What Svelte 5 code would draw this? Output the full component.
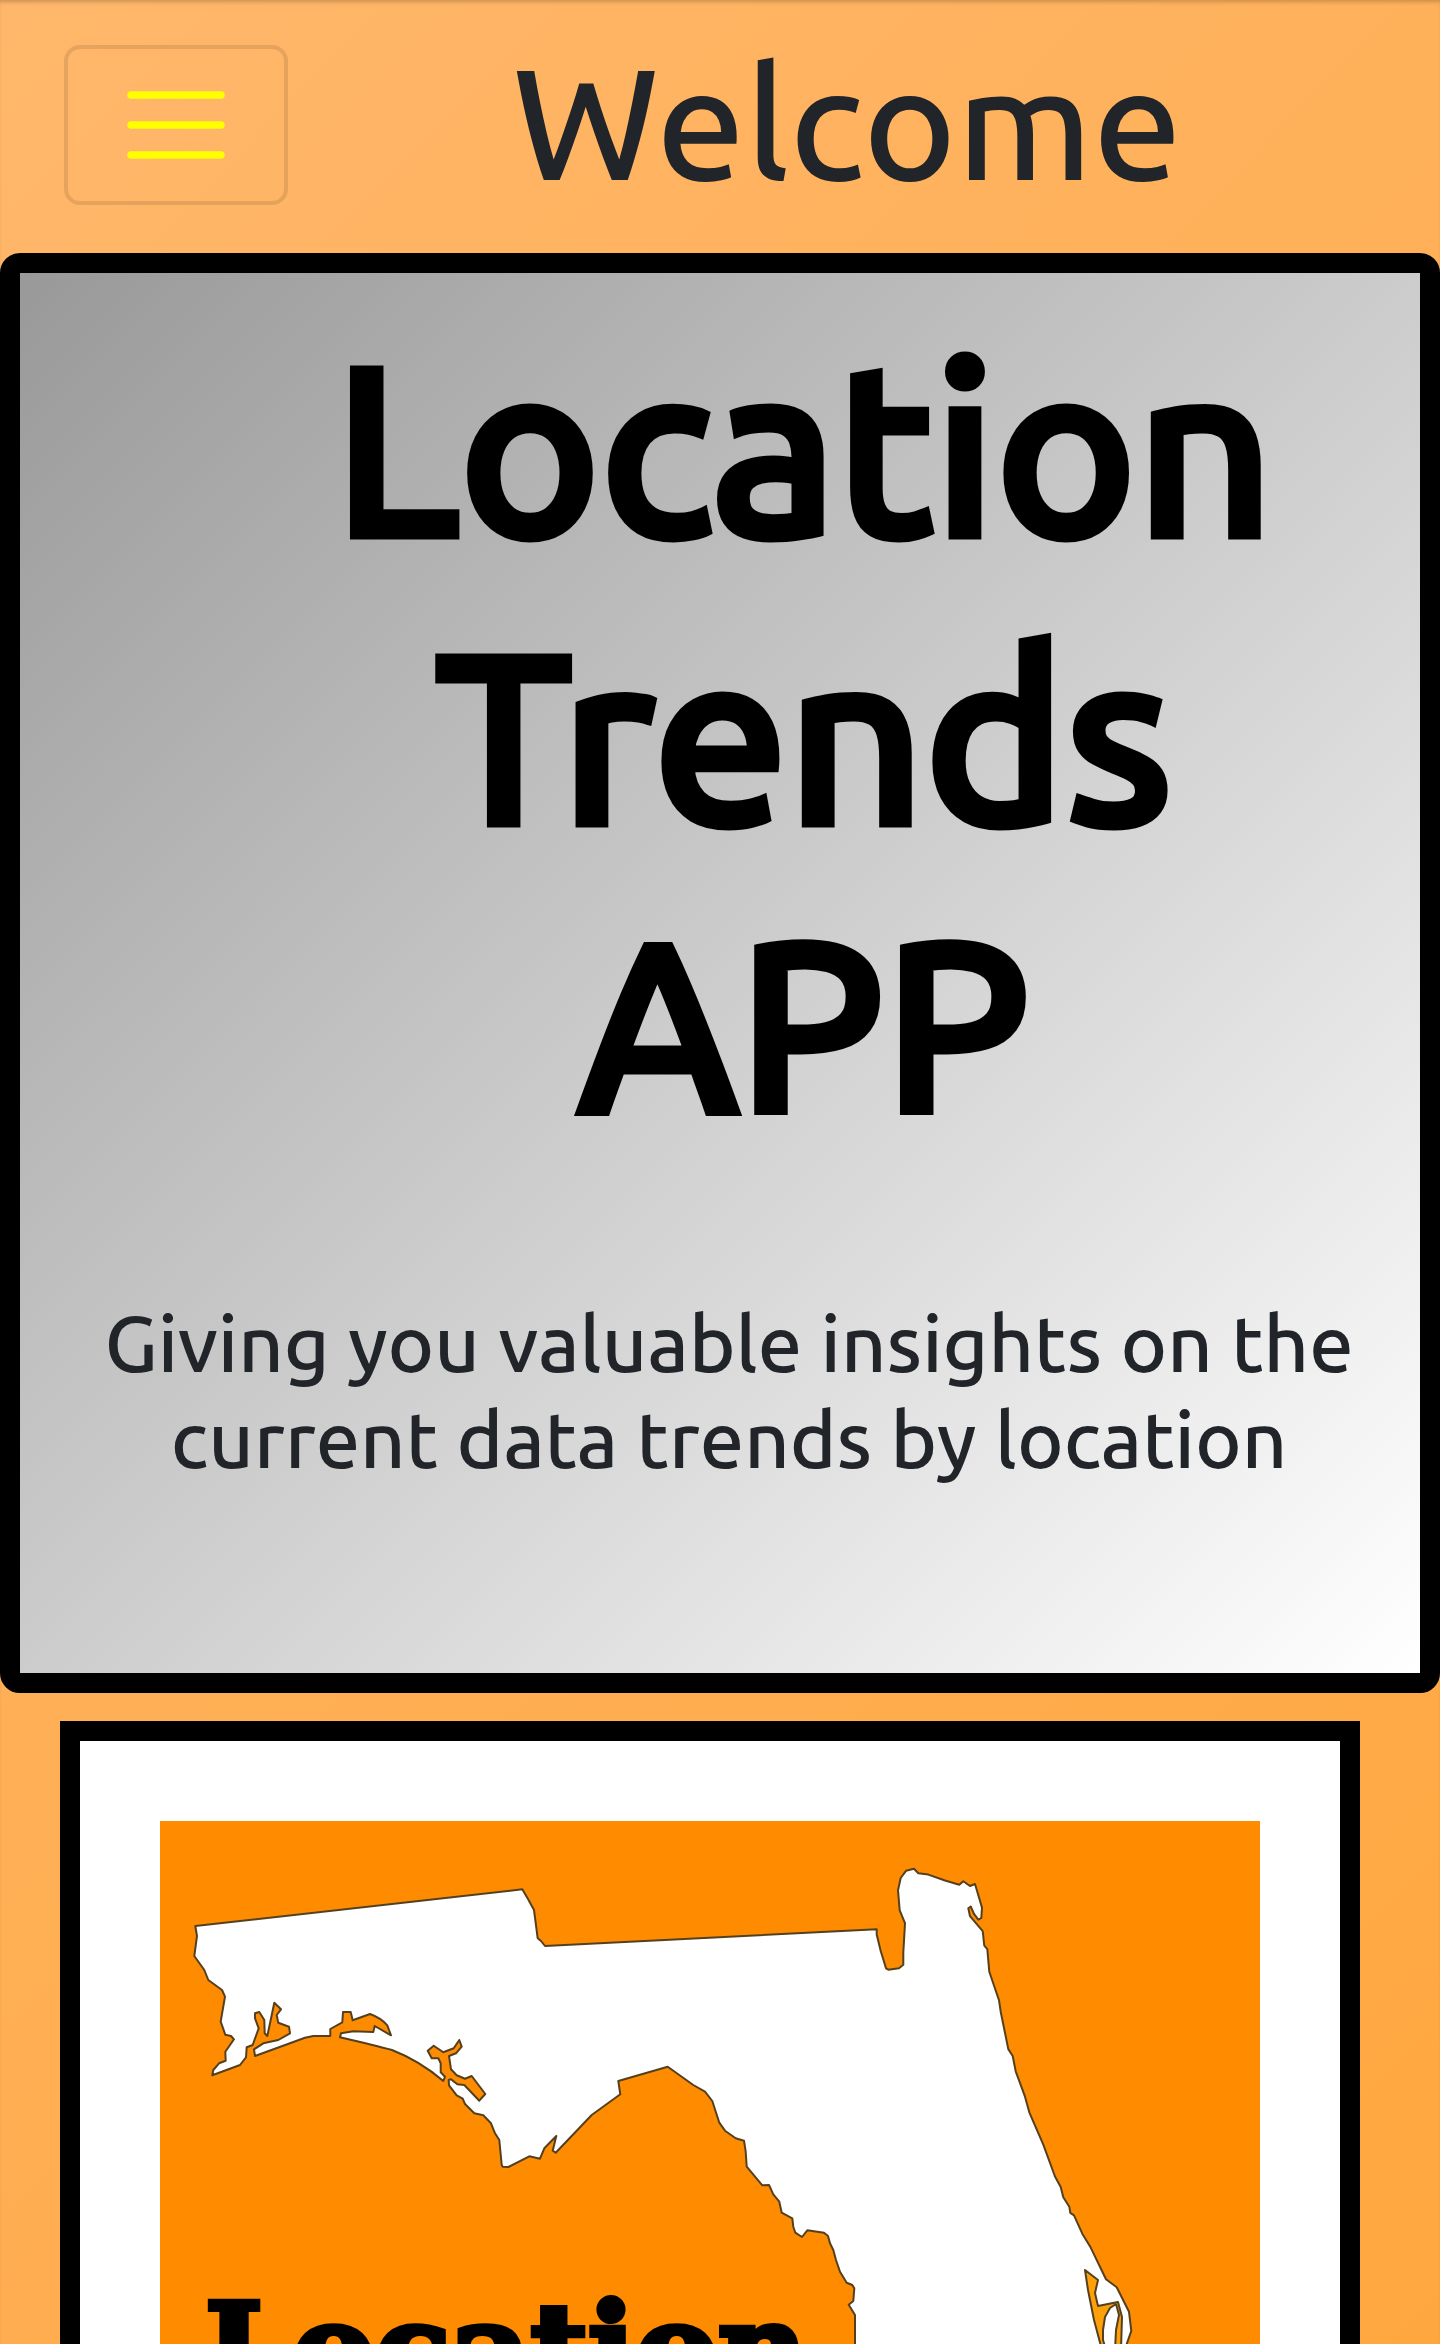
<script>
  let open = $state(false);
</script>

<div class="page">
  <header class="navbar">
    <button
      class="toggler"
      type="button"
      aria-label="Toggle navigation"
      aria-expanded={open}
      onclick={() => (open = !open)}
    >
      <svg class="bars" viewBox="0 0 32 32" aria-hidden="true">
        <path d="M4 8h24M4 16h24M4 24h24" />
      </svg>
    </button>
    <h2 class="welcome">Welcome</h2>
  </header>

  <main>
    <section class="hero">
      <h1 class="title">Location Trends APP</h1>
      <p class="lead">Giving you valuable insights on the current data trends by location</p>
    </section>

    <section class="card">
      <svg class="map" viewBox="160 1821 1100 1100" role="img" aria-label="Location logo over a map of Florida">
        <rect class="sea" x="160" y="1821" width="1100" height="1100" />
        <path
          class="land"
          d="M195.3 1926L522.3 1889.3 528 1899 534 1910 537.7 1938.3 541 1941 545 1946 876.7 1929.3 876.7 1934.6 880.7 1951 886 1968.3 888.3 1969.7 899 1968.3 903.3 1964.8 903.3 1952.7 905 1923.2 899.7 1910.3 898 1890.2 900.7 1878 906 1870.8 914 1868.7 918.3 1873.2 928.3 1874.6 945 1880.5 959.3 1884.7 963.3 1881.2 970 1886 975 1884 982 1907.6 981.3 1918 978.3 1919.7 974 1913.8 970.7 1906.5 968.3 1908.3 970 1916.2 982.7 1931.2 984.3 1945.7 987.3 1949.2 989.3 1971.8 999 2000.2 1000.7 2011.7 1008.3 2049.1 1012.7 2056 1015.7 2071.3 1025 2096.7 1029.3 2112.3 1043.3 2144.6 1055 2176.5 1060.7 2186.9 1063.3 2197.3 1069.3 2206.7 1070.3 2212.9 1074 2215.3 1082.3 2233.7 1090.7 2247.6 1106 2279.2 1116.7 2287.2 1129 2311.8 1131.3 2330.9 1126.7 2344 1150 2480 1120 2700 1010 2640 900 2480 855 2400 855 2315 848.7 2304.7 853.3 2301 854.3 2288.3 852.3 2285 846.7 2282.7 840 2271.7 836 2260 833.3 2250 830 2243.3 828 2236 824 2232.7 807.3 2230.3 802 2237 795.3 2232.7 793.3 2226.7 792.3 2218.3 781.7 2212.7 779.3 2201.7 773.3 2194.3 769 2185 762.3 2185.3 746.7 2166.7 745.7 2151.7 744 2140.7 735.7 2138.3 725 2130.7 719.3 2122.7 712.3 2101 705 2091.7 693.3 2085 667.7 2066.7 618.3 2081 620.3 2094.3 591.7 2115 555.7 2152.7 552.7 2150.7 556.3 2136 544.3 2148.3 540 2158.7 529.3 2156.3 508.3 2167 502.7 2166.7 501.7 2165 499.3 2140 495 2133.3 491 2123.3 483.3 2115.3 474.3 2113.3 465 2104 462.7 2098.7 456.7 2095.3 449 2085.3 448.7 2080 451 2079.3 457.3 2084.3 464.3 2085 479.3 2100.7 485.3 2094 471.7 2076 465 2078.7 456.7 2075.3 451 2069.3 449 2056 456 2053.3 461.7 2046.7 459.3 2040 453.7 2048.3 443.3 2052.3 433.7 2045.7 427.7 2050.7 431.7 2058.3 438.3 2058.3 440.7 2063.3 440.7 2072.3 445 2076.7 443.3 2081 Q420 2061 392 2050 376.7 2046 340 2037.3L341 2033.3 353.3 2031.3 373.3 2032 374.7 2026 391 2035.3 387.3 2025.3Q381 2018 370 2014L352.7 2020.3 350.7 2012 343 2012 342.3 2022.3 330.3 2029 330.3 2036 313.3 2036 305 2037.7 255 2056 254 2049.3 263.3 2043.3 278.3 2040 290 2033.3 289 2026.7 278.3 2022.7 276.7 2015 281 2009.3 274.3 2002.7 270.7 2020 267.3 2036 264.7 2033.3 264.3 2020 259.3 2012 255 2013.3 255 2018.3 258.7 2028.3 252.7 2045 246.7 2047.3 246 2057.3 240 2065 212.3 2075.3 213.3 2070 219 2063.3 225.7 2060.7 225.3 2051.7 234 2039.3 231 2036 225.3 2034.7 220.7 2021.7 225 1996.7 222 1990 208.3 1980 204.3 1970 194.3 1956 197 1936Z"
        />
        <path
          class="lagoon"
          d="M1085 2270L1098 2280 1095 2293 1098 2306 1118 2302 1122 2317 1121 2350 1115 2350 1116 2330 1119 2315 1116 2304 1110 2308 1105 2317 1103 2330 1103 2340 1106 2350 1102 2350 1094 2320 1088 2290Z"
        />
        <text class="logo" x="205" y="2392">Location</text>
      </svg>
    </section>
  </main>
</div>

<style>
  :global(body) {
    margin: 0;
  }

  .page {
    height: 100vh;
    overflow: hidden;
    font-family: 'Ubuntu', 'Noto Sans', sans-serif;
    font-weight: 500;
    color: #212529;
    background: linear-gradient(135deg, #ffb76b 0%, #ffa73f 100%);
    box-shadow: inset 0 4px 4px -2px rgba(0, 0, 0, 0.2);
  }

  .navbar {
    display: flex;
    align-items: flex-start;
    padding: 45px 34px 48px 64px;
  }

  .toggler {
    box-sizing: border-box;
    width: 224px;
    height: 160px;
    flex: none;
    display: flex;
    align-items: center;
    justify-content: center;
    padding: 0;
    border: 4px solid rgba(0, 0, 0, 0.1);
    border-radius: 16px;
    background: transparent;
    cursor: pointer;
  }

  .bars {
    width: 120px;
    height: 120px;
    fill: none;
    stroke: #ff0;
    stroke-width: 2;
    stroke-linecap: round;
  }

  .welcome {
    flex: 1;
    margin: 0;
    font-size: 158px;
    font-weight: inherit;
    line-height: 154px;
    text-align: center;
  }

  .hero {
    box-sizing: border-box;
    min-height: 1440px;
    padding: 30px 40px 28px 58px;
    border: 20px solid #000;
    border-radius: 20px;
    background: linear-gradient(135deg, #999 0%, #ccc 50%, #fff 100%) padding-box;
    text-align: center;
  }

  .title {
    margin: 0 96px 128px 246px;
    color: #000;
    font-size: 238px;
    font-weight: inherit;
    line-height: 288px;
    -webkit-text-stroke: 9px #000;
  }

  .lead {
    margin: 0;
    font-size: 79px;
    line-height: 96px;
  }

  .card {
    margin: 28px 80px 0 60px;
    padding: 80px;
    border: 20px solid #000;
    background: #fff;
  }

  .map {
    display: block;
    width: 100%;
  }

  .sea {
    fill: #ff8c00;
  }

  .land {
    fill: #fff;
    stroke: #54401f;
    stroke-width: 2;
    stroke-linejoin: round;
  }

  .lagoon {
    fill: #ffa00a;
    stroke: #54401f;
    stroke-width: 2;
    stroke-linejoin: round;
  }

  .logo {
    font-family: 'DejaVu Serif', serif;
    font-size: 124px;
    font-weight: 700;
    fill: #000;
    stroke: #000;
    stroke-width: 6;
  }
</style>
